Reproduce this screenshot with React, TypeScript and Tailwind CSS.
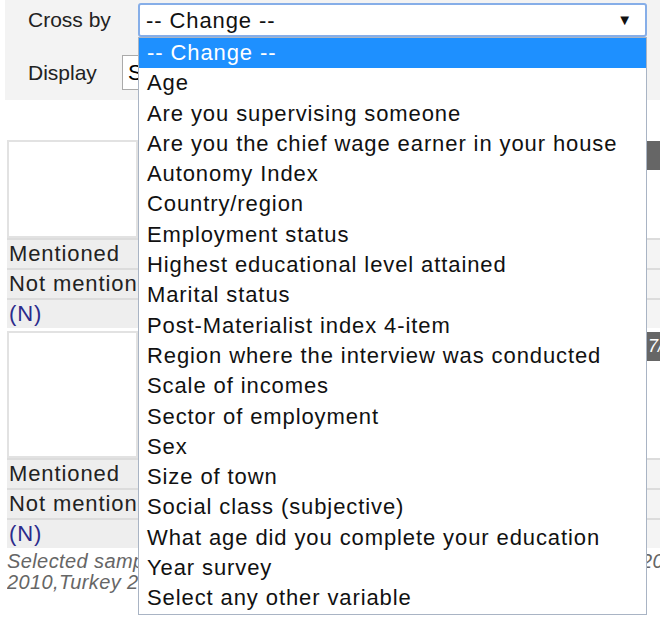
import React from 'react';

const OPTIONS = [
    '-- Change --',
    'Age',
    'Are you supervising someone',
    'Are you the chief wage earner in your house',
    'Autonomy Index',
    'Country/region',
    'Employment status',
    'Highest educational level attained',
    'Marital status',
    'Post-Materialist index 4-item',
    'Region where the interview was conducted',
    'Scale of incomes',
    'Sector of employment',
    'Sex',
    'Size of town',
    'Social class (subjective)',
    'What age did you complete your education',
    'Year survey',
    'Select any other variable',
];

const DataRows: React.FC = () => (
    <>
        {['Mentioned', 'Not mentioned', '(N)'].map(label => (
            <div key={label} className="flex h-[30px] border-t-2 border-[#dcdcdc]">
                <div className={`w-[131px] shrink-0 overflow-hidden whitespace-nowrap bg-[#eeeeee] pl-[2px] leading-[28px] ${label === '(N)' ? 'text-[#2b2b8c]' : 'text-[#222]'}`}>
                    {label}
                </div>
                <div className="flex-1 bg-[#f4f4f4]"></div>
            </div>
        ))}
    </>
);

const Block: React.FC<{ headerHeight: string; mark?: string }> = ({ headerHeight, mark }) => (
    <div>
        <div className={`flex ${headerHeight}`}>
            <div className="w-[131px] shrink-0 border-2 border-[#e2e2e2] bg-white"></div>
            <div className="flex flex-1 justify-end">
                <div className="mt-[1px] h-[29px] w-[13px] overflow-hidden bg-[#666] pl-[1px] text-[18px] italic leading-[29px] tracking-normal text-white">{mark}</div>
            </div>
        </div>
        <DataRows />
    </div>
);

const App: React.FC = () => {
    return (
        <div className="relative h-[623px] w-[669px] overflow-hidden bg-white font-['Liberation_Sans',Arial,sans-serif] text-[22px] tracking-[0.9px]">
            <div className="ml-[5px] h-[100px] w-[655px] bg-[#f3f3f3]">
                <div className="flex items-center pt-[3px]">
                    <span className="w-[133px] shrink-0 pl-[23px] text-[21px] tracking-normal text-[#222]">Cross by</span>
                    <div className="flex h-[34px] w-[509px] items-center justify-between rounded-[3px] border-2 border-[#86aee8] bg-white pl-[6px] pr-[12px] text-[#111]">
                        <span>-- Change --</span>
                        <span className="text-[15px]">▼</span>
                    </div>
                </div>
                <div className="mt-[18px] flex items-center">
                    <span className="w-[117px] shrink-0 pl-[23px] text-[21px] tracking-normal text-[#222]">Display</span>
                    <div className="h-[35px] w-[40px] border border-[#aaa] bg-white pl-[5px] leading-[33px]">S</div>
                </div>
            </div>

            <div className="ml-[7px] mt-[40px] w-[653px]">
                <Block headerHeight="h-[98px]" />
                <div className="h-[3px]"></div>
                <Block headerHeight="h-[127px]" mark="7/" />
                <div className="mt-[3px] overflow-hidden whitespace-nowrap text-[20px] italic leading-[21px] tracking-[0.4px] text-[#666]">
                    <div className="flex justify-between">
                        <span>Selected samples: Albania 2008, Bulgaria 2008, Croatia</span>
                        <span className="-mr-[4px]">20</span>
                    </div>
                    <div>2010,Turkey 2008</div>
                </div>
            </div>

            <div className="absolute left-[138px] top-[37px] w-[509px] border border-[#a9b4c4] bg-white">
                {OPTIONS.map((opt, i) => (
                    <div
                        key={opt}
                        className={`h-[30.3px] whitespace-nowrap pl-[8px] leading-[30px] ${i === 0 ? 'bg-[#1e90ff] text-white' : 'text-[#111]'}`}
                    >
                        {opt}
                    </div>
                ))}
            </div>
        </div>
    );
};

export default App;
